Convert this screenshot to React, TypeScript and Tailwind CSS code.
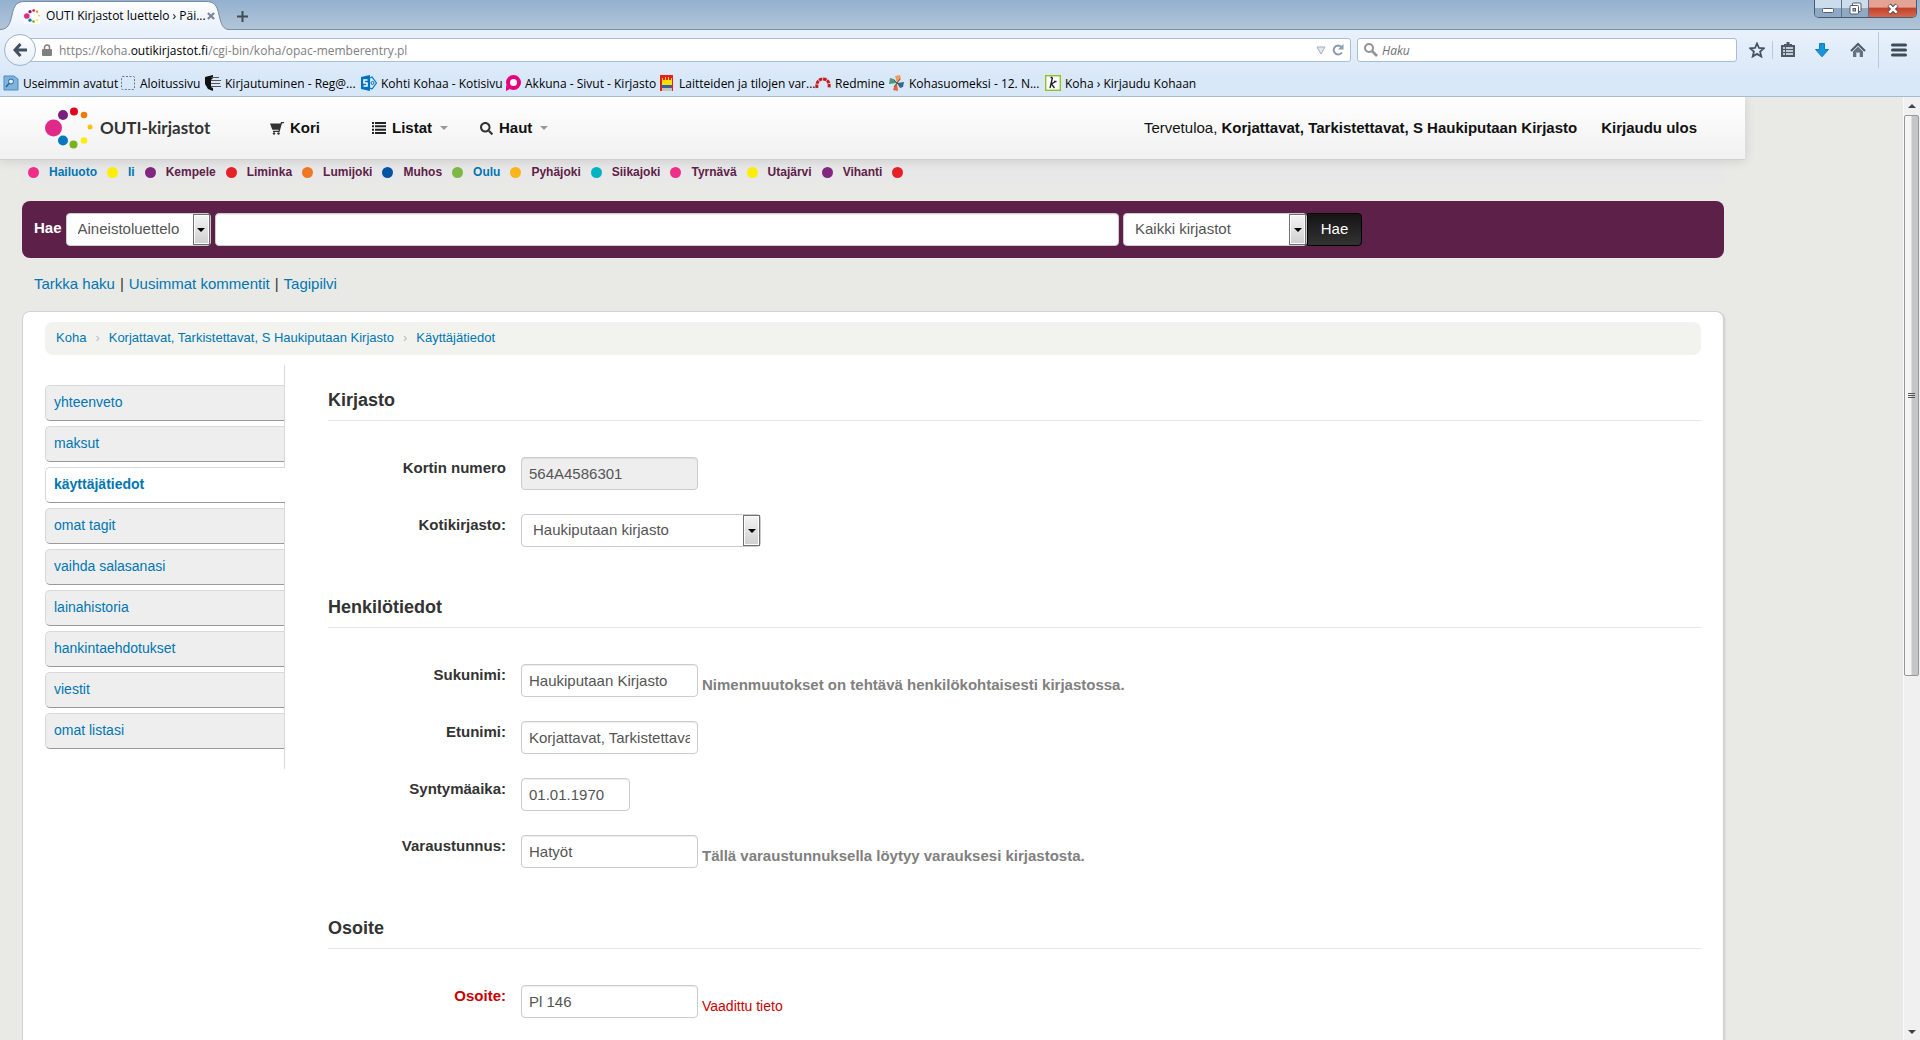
import { type ReactNode } from "react";
import { FaSearch } from "react-icons/fa";

const towns = [
  { name: "Hailuoto", dot: "bg-[#ee2e87]", link: true },
  { name: "Ii", dot: "bg-[#fdee0a]", link: true },
  { name: "Kempele", dot: "bg-[#82277f]" },
  { name: "Liminka", dot: "bg-[#e62127]" },
  { name: "Lumijoki", dot: "bg-[#ee7824]" },
  { name: "Muhos", dot: "bg-[#0454a4]" },
  { name: "Oulu", dot: "bg-[#7cb843]", link: true },
  { name: "Pyhäjoki", dot: "bg-[#f8b51c]" },
  { name: "Siikajoki", dot: "bg-[#00b4c3]" },
  { name: "Tyrnävä", dot: "bg-[#ee2e87]" },
  { name: "Utajärvi", dot: "bg-[#fdee0a]" },
  { name: "Vihanti", dot: "bg-[#82277f]" },
];

const tabs = [
  "yhteenveto",
  "maksut",
  "käyttäjätiedot",
  "omat tagit",
  "vaihda salasanasi",
  "lainahistoria",
  "hankintaehdotukset",
  "viestit",
  "omat listasi",
];

function LogoDots({ className }: { className: string }) {
  return (
    <svg viewBox="0 0 48 42" className={className} aria-hidden>
      <circle cx="8.5" cy="21" r="8.5" fill="#df2a8a" />
      <circle cx="18" cy="8" r="5" fill="#7b1f80" />
      <circle cx="29" cy="4.5" r="4" fill="#e2061c" />
      <circle cx="39" cy="8" r="3.3" fill="#ee7d0c" />
      <circle cx="45" cy="20" r="2.5" fill="#fbbf08" />
      <circle cx="39" cy="33.5" r="3.3" fill="#fdee0a" />
      <circle cx="28.5" cy="37.5" r="4" fill="#78b41c" />
      <circle cx="18" cy="33.5" r="5" fill="#0578be" />
    </svg>
  );
}

function WindowButtons() {
  return (
    <div className="flex h-[18px] w-[103px] self-start overflow-hidden rounded-b-[5px] border border-t-0 border-[#4b5b6e]">
      <button aria-label="Pienennä" className="flex flex-1 items-center justify-center border-r border-[#5f7186] bg-linear-to-b from-[#cbdcec] from-45% to-[#8fa9c4] to-50%">
        <svg viewBox="0 0 12 12" className="h-3 w-3">
          <rect x="0.5" y="5.5" width="11" height="4" rx="1" fill="#fff" stroke="#525c6b" />
        </svg>
      </button>
      <button aria-label="Palauta" className="flex flex-1 items-center justify-center border-r border-[#5f7186] bg-linear-to-b from-[#cbdcec] from-45% to-[#8fa9c4] to-50%">
        <svg viewBox="0 0 13 13" className="h-[13px] w-[13px]">
          <rect x="3.5" y="1" width="8.5" height="8.5" rx="1" fill="#fff" stroke="#525c6b" />
          <rect x="1" y="3.5" width="8.5" height="8.5" rx="1" fill="#fff" stroke="#525c6b" />
          <rect x="4" y="6.5" width="2.5" height="2.5" fill="#a8bacd" stroke="#525c6b" />
        </svg>
      </button>
      <button aria-label="Sulje" className="flex w-[47px] items-center justify-center bg-linear-to-b from-[#e3a496] from-40% via-[#c4412c] via-50% to-[#d4694f]">
        <svg viewBox="0 0 12 12" className="h-3 w-3">
          <path d="M2 2l8 8M10 2l-8 8" stroke="#5a4650" strokeWidth="4.5" />
          <path d="M2.3 2.3l7.4 7.4M9.7 2.3l-7.4 7.4" stroke="#fff" strokeWidth="2.6" />
        </svg>
      </button>
    </div>
  );
}

function TitleBar() {
  return (
    <div className="flex h-[30px] items-start justify-between border-b border-[#7590aa] bg-linear-to-b from-[#93b1d0] to-[#b3c5d7]">
      <div className="flex h-[30px]">
        <div className="relative h-[30px] w-[229px]">
          <svg viewBox="0 0 229 30" className="absolute inset-0 h-[30px] w-[229px]" aria-hidden>
            <defs>
              <linearGradient id="tab" x1="0" y1="0" x2="0" y2="1">
                <stop offset="0" stopColor="#fdfeff" />
                <stop offset="1" stopColor="#e9f1fb" />
              </linearGradient>
            </defs>
            <path d="M0 29.5C8 29.5 10 24 12 15C14 5 17 1.5 25 1.5H206C214 1.5 217 5 219 15C221 24 223 29.5 229 29.5V30H0Z" fill="url(#tab)" />
            <path d="M0 29.5C8 29.5 10 24 12 15C14 5 17 1.5 25 1.5H206C214 1.5 217 5 219 15C221 24 223 29.5 229 29.5" fill="none" stroke="#748ba5" />
          </svg>
          <div className="relative flex h-8 items-center pr-[14px] pl-6">
            <span className="flex h-4 w-4 items-center bg-white">
              <LogoDots className="h-4 w-4" />
            </span>
            <span className="ml-1.5 flex-1 whitespace-nowrap">OUTI Kirjastot luettelo › Päi...</span>
            <button aria-label="Sulje välilehti">
              <svg viewBox="0 0 9 9" className="h-2 w-2">
                <path d="M1 1l7 7M8 1l-7 7" stroke="#7c8794" strokeWidth="2.4" />
              </svg>
            </button>
          </div>
        </div>
        <button aria-label="Uusi välilehti" className="ml-2 flex h-8 items-center">
          <svg viewBox="0 0 11 11" className="h-[11px] w-[11px]">
            <path d="M5.5 0v11M0 5.5h11" stroke="#3f4c58" strokeWidth="2" />
          </svg>
        </button>
      </div>
      <div className="pr-[3px]">
        <WindowButtons />
      </div>
    </div>
  );
}

function NavBar() {
  return (
    <div className="flex h-10 items-center pr-[13px] pl-1">
      <button aria-label="Takaisin" className="relative z-10 flex h-8 w-8 shrink-0 items-center justify-center rounded-full border border-[#9db2ca] bg-linear-to-b from-white to-[#e6eff9]">
        <svg viewBox="0 0 14 14" className="h-3.5 w-3.5">
          <path d="M7.5 1L2 7l5.500 6M2.500 7H14" fill="none" stroke="#43505d" strokeWidth="3" />
        </svg>
      </button>
      <div className="-ml-3 flex h-6 flex-1 items-center rounded-[3px] border border-[#a9bdd5] bg-white pr-1.5 pl-[17px]">
        <svg viewBox="0 0 10 12" className="h-3 w-2.5 shrink-0" aria-hidden>
          <path d="M2.500 6V3.500a2.500 2.500 0 015 0V6" fill="none" stroke="#808080" strokeWidth="1.5" />
          <rect y="5" width="10" height="7" rx="1" fill="#808080" />
        </svg>
        <div className="ml-[7px] flex-1 pt-0.5 text-[#808080]">
          https://koha.<span className="text-black">outikirjastot.fi</span>/cgi-bin/koha/opac-memberentry.pl
        </div>
        <svg viewBox="0 0 10 9" className="h-[9px] w-2.5" aria-hidden>
          <path d="M1 1h8L5 8z" fill="#e2e8ef" stroke="#a4b0bd" />
        </svg>
        <button aria-label="Päivitä" className="ml-1.5">
          <svg viewBox="0 0 12 12" className="h-3 w-3">
            <path d="M10 8.500A4.500 4.500 0 116 1.500c1.500 0 2.500.6 3.500 1.700" fill="none" stroke="#8b9cb0" strokeWidth="2" />
            <path d="M11.500 0v5.500H6z" fill="#8b9cb0" />
          </svg>
        </button>
      </div>
      <label className="ml-1.5 flex h-6 w-[380px] items-center rounded-[3px] border border-[#a9bdd5] bg-white px-1.5">
        <svg viewBox="0 0 14 14" className="h-3.5 w-3.5 shrink-0" aria-hidden>
          <circle cx="5" cy="5" r="4" fill="none" stroke="#939393" strokeWidth="2" />
          <path d="M8 8l5 5" stroke="#939393" strokeWidth="2.6" />
        </svg>
        <input aria-label="Haku" placeholder="Haku" className="ml-1 w-full bg-transparent pt-0.5 outline-none placeholder:text-[#707070] placeholder:italic" />
      </label>
      <button aria-label="Lisää kirjanmerkki" className="ml-3">
        <svg viewBox="0 0 16 16" className="h-4 w-4">
          <path d="M8 1.500l2 4.500 4.800.4-3.700 3.200 1.200 4.900L8 11.900l-4.300 2.600 1.200-4.900L1.200 6.400 6 6z" fill="none" stroke="#45525f" strokeWidth="1.8" />
        </svg>
      </button>
      <div className="mx-[7px] h-[18px] w-px bg-[#b9cadd]" />
      <button aria-label="Kirjanmerkit">
        <svg viewBox="0 0 16 16" className="h-4 w-4">
          <path d="M1 3h14v12H1z" fill="#4d5a67" />
          <path d="M4 3V2h2.500V0h3v2H12v1z" fill="#4d5a67" />
          <path d="M3 6h2M6 6h7M3 9h2M6 9h7M3 12h2M6 12h7" stroke="#eef4fb" strokeWidth="1.7" />
        </svg>
      </button>
      <button aria-label="Lataukset" className="ml-[18px]">
        <svg viewBox="0 0 16 16" className="h-4 w-4">
          <path d="M5.500 1.500h5v6h4L8 14.800 1.500 7.500h4z" fill="#1795da" stroke="#0f7cbb" />
        </svg>
      </button>
      <button aria-label="Koti" className="ml-5">
        <svg viewBox="0 0 16 16" className="h-4 w-4">
          <path d="M1 9l7-7 7 7" fill="none" stroke="#4d5a67" strokeWidth="2" />
          <path d="M3 9.500l5-5 5 5V15h-3.300v-4.500H6.300V15H3z" fill="#65717e" />
        </svg>
      </button>
      <div className="mx-3 h-9 w-px bg-[#b9cadd]" />
      <button aria-label="Valikko">
        <svg viewBox="0 0 16 14" className="h-3.5 w-4">
          <path d="M1.500 2h13M1.500 7h13M1.500 12h13" stroke="#3f4c57" strokeWidth="3" strokeLinecap="round" />
        </svg>
      </button>
    </div>
  );
}

function Bookmark({ width, icon, children }: { width: string; icon: ReactNode; children: ReactNode }) {
  return (
    <a href="#" className={`flex shrink-0 items-center gap-1 whitespace-nowrap ${width}`}>
      <svg viewBox="0 0 16 16" className="h-4 w-4 shrink-0" aria-hidden>
        {icon}
      </svg>
      <span className="pt-0.5">{children}</span>
    </a>
  );
}

function BookmarksBar() {
  return (
    <nav className="flex h-[26px] items-center pl-[3px]">
      <Bookmark
        width="w-[117px]"
        icon={
          <>
            <path d="M1 1h10l4 3v11H1z" fill="#7fb4de" stroke="#4c8cbd" />
            <circle cx="8" cy="6.5" r="2.5" fill="#d8ecfa" stroke="#2a648f" />
            <path d="M6 8.500L3 12" stroke="#2a648f" strokeWidth="1.5" />
          </>
        }
      >
        Useimmin avatut
      </Bookmark>
      <Bookmark width="w-[85px]" icon={<rect x="1.5" y="1.5" width="13" height="13" rx="1" fill="none" stroke="#6d7682" strokeDasharray="2 1.5" />}>
        Aloitussivu
      </Bookmark>
      <Bookmark
        width="w-[156px]"
        icon={
          <>
            <path d="M0 2l8-2v3L6 5v7l2 1v3L3 14 0 9z" fill="#111" />
            <path d="M6 2.500h8M6 5.500h10M6 8.500h9M6 11.500h10" stroke="#555" />
          </>
        }
      >
        Kirjautuminen - Reg@...
      </Bookmark>
      <Bookmark
        width="w-[144px]"
        icon={
          <>
            <path d="M9 3l2-1 4.500 6L11 14l-2-1" fill="#d3e9f8" stroke="#0072c6" strokeWidth="1.2" />
            <circle cx="11.5" cy="8" r="1.5" fill="none" stroke="#0072c6" />
            <path d="M0 2l9-2v16l-9-2z" fill="#0072c6" />
            <path d="M6.500 5H3v3h3v3H2.500" fill="none" stroke="#fff" strokeWidth="1.5" />
          </>
        }
      >
        Kohti Kohaa - Kotisivu
      </Bookmark>
      <Bookmark
        width="w-[154px]"
        icon={
          <>
            <circle cx="8.5" cy="7.5" r="5.5" fill="#fff" stroke="#e6007e" strokeWidth="4" />
            <path d="M1 10l4 4-4 2z" fill="#e6007e" />
          </>
        }
      >
        Akkuna - Sivut - Kirjasto
      </Bookmark>
      <Bookmark
        width="w-[156px]"
        icon={
          <>
            <path d="M1 0h13v16H1z" fill="#ee1c1c" />
            <path d="M3 3h1v2h2V2h1v3h2V2h1v3h2V3h1v7H3z" fill="#ffe000" />
            <path d="M2 10h11l-1 3H3z" fill="#2f64a8" />
            <path d="M3 13h10v3H3z" fill="#c9c3b0" />
          </>
        }
      >
        Laitteiden ja tilojen var...
      </Bookmark>
      <Bookmark
        width="w-[74px]"
        icon={<path d="M2 13C1 7 4 4 8 4s7 3 6 9" fill="none" stroke="#c81a1a" strokeWidth="3" strokeDasharray="3.5 .7" />}
      >
        Redmine
      </Bookmark>
      <Bookmark
        width="w-[156px]"
        icon={
          <>
            <path d="M8 8L6 1l5-1 1 4z" fill="#f19a5b" />
            <path d="M8 8l7-1-1 5-3 1z" fill="#35668f" />
            <path d="M8 8l1 8-5-1 1-3z" fill="#e8603c" />
            <path d="M8 8L0 9l1-6 4 1z" fill="#4a9a7c" />
            <path d="M5 5l6 6M11 4L5 12" stroke="#555" />
          </>
        }
      >
        Kohasuomeksi - 12. N...
      </Bookmark>
      <Bookmark
        width="w-[150px]"
        icon={
          <>
            <rect x=".7" y=".7" width="14.6" height="14.6" fill="#fff" stroke="#8fc31f" strokeWidth="1.4" />
            <path d="M7.500 2.500L5 13M10.500 6.500L6.500 9l3 4M9 6.500h2.500M5.500 2.500h2" fill="none" stroke="#222" strokeWidth="1.4" />
          </>
        }
      >
        Koha › Kirjaudu Kohaan
      </Bookmark>
    </nav>
  );
}

function Caret() {
  return <span className="ml-2 h-0 w-0 border-x-4 border-t-4 border-x-transparent border-t-[#999]" />;
}

function SiteHeader() {
  return (
    <header className="relative flex h-[63px] items-center border-b border-[#d0d0d0] bg-linear-to-b from-white to-[#f1f1f1] pr-12 pl-[45px] text-[15px] leading-5 text-[#111] shadow-[0_1px_10px_rgba(0,0,0,0.12)]">
      <a href="#" className="flex w-[225px] items-center gap-[7px]">
        <LogoDots className="h-[42px] w-12" />
        <span className="font-['Lato','Open_Sans',sans-serif] text-[17px] font-bold text-[#333]">OUTI-kirjastot</span>
      </a>
      <a href="#" className="flex w-[102px] items-center gap-1.5 font-bold">
        <svg viewBox="0 0 14 14" className="h-3.5 w-3.5" aria-hidden>
          <path d="M0 2.500h10.500L11 1h3v1.300h-2L9.500 11H3V9.700h5.500l.2-.9H2.300z" fill="#333" />
          <circle cx="4" cy="12.5" r="1.2" fill="#333" />
          <circle cx="8.5" cy="12.5" r="1.2" fill="#333" />
        </svg>
        Kori
      </a>
      <a href="#" className="flex w-[108px] items-center font-bold">
        <svg viewBox="0 0 14 14" className="mr-1.5 h-3.5 w-3.5" aria-hidden>
          <path d="M0 2h2M3 2h11M0 5.300h2M3 5.300h11M0 8.700h2M3 8.700h11M0 12h2M3 12h11" stroke="#222" strokeWidth="2" />
        </svg>
        Listat
        <Caret />
      </a>
      <a href="#" className="flex items-center font-bold">
        <FaSearch size={13} className="mr-1.5 text-[#333]" />
        Haut
        <Caret />
      </a>
      <div className="ml-auto flex gap-6 whitespace-nowrap">
        <span>
          Tervetuloa,{" "}
          <a href="#" className="font-bold">
            Korjattavat, Tarkistettavat, S Haukiputaan Kirjasto
          </a>
        </span>
        <a href="#" className="font-bold">
          Kirjaudu ulos
        </a>
      </div>
    </header>
  );
}

function TownStrip() {
  return (
    <div className="flex h-[23px] items-center gap-[10px] bg-[#e8e8e8] pt-px pl-1.5 text-[12px] font-bold">
      {towns.map((t) => (
        <span key={t.name} className="flex items-center gap-[10px]">
          <span className={`h-[11px] w-[11px] rounded-full ${t.dot}`} />
          <a href="#" className={t.link ? "text-[#0076b2]" : "text-[#5d2149]"}>
            {t.name}
          </a>
        </span>
      ))}
      <span className="h-[11px] w-[11px] rounded-full bg-[#e62127]" />
    </div>
  );
}

function Select({ id, value, className }: { id: string; value: string; className: string }) {
  return (
    <span className={`relative inline-flex h-[33px] ${className}`}>
      <select id={id} className="h-full w-full appearance-none rounded-[4px] border border-[#ccc] bg-white pr-5 pl-[11px] text-[15px] text-[#555]">
        <option>{value}</option>
      </select>
      <span className="pointer-events-none absolute inset-y-px right-px flex w-[17px] items-center justify-center border border-[#707070] bg-linear-to-b from-[#f4f4f4] to-[#cfcfcf] shadow-[inset_0_0_0_1px_#fcfcfc]">
        <span className="border-x-4 border-t-4 border-x-transparent border-t-black" />
      </span>
    </span>
  );
}

function SearchBar() {
  return (
    <form className="mt-[18px] flex h-[57px] items-center rounded-lg bg-[#5d2149] pr-[362px] pl-3 text-[15px]">
      <label htmlFor="search-type" className="mr-1 pb-0.5 font-bold text-white">
        Hae
      </label>
      <Select id="search-type" value="Aineistoluettelo" className="w-[145px] shrink-0" />
      <input aria-label="Hakusanat" className="mx-1 h-[33px] min-w-0 flex-1 rounded-[4px] border border-[#ccc] bg-white px-1.5 shadow-[inset_0_1px_1px_rgba(0,0,0,0.075)]" />
      <Select id="search-library" value="Kaikki kirjastot" className="w-[184px] shrink-0" />
      <button type="button" className="h-[33px] w-[55px] rounded-r-[4px] border border-black bg-linear-to-b from-[#151515] to-[#333] text-white">
        Hae
      </button>
    </form>
  );
}

function Sidebar() {
  return (
    <nav className="flex h-[404px] w-[240px] shrink-0 flex-col border-r border-[#d8d8d8] pt-5 text-[14px]">
      {tabs.map((tab) => {
        const active = tab === "käyttäjätiedot";
        return (
          <a
            key={tab}
            href="#"
            className={`mb-[5px] flex h-9 items-center rounded-l-[5px] border border-r-0 border-[#d8d8d8] border-b-[#999] pb-px pl-2 text-[#0076b2] ${
              active ? "-mr-px bg-white font-bold" : "bg-[#eee]"
            }`}
          >
            {tab}
          </a>
        );
      })}
    </nav>
  );
}

function Section({ title, children }: { title: string; children: ReactNode }) {
  return (
    <fieldset className="mb-12">
      <legend className="w-full border-b border-[#e5e5e5] pb-2 text-[18px] leading-6 font-bold text-[#333]">{title}</legend>
      <div className="mt-9 flex flex-col gap-6">{children}</div>
    </fieldset>
  );
}

function Row({ id, label, required, hint, children }: { id: string; label: string; required?: boolean; hint?: string; children: ReactNode }) {
  return (
    <div className="flex h-[33px] items-start">
      <label htmlFor={id} className={`mr-[15px] w-[178px] text-right text-[15px] leading-[22px] font-bold ${required ? "text-[#c00]" : "text-[#333]"}`}>
        {label}
      </label>
      {children}
      {hint && <span className={`ml-1 self-end leading-6 ${required ? "text-[14px] text-[#c00]" : "text-[15px] font-bold text-[#808080]"}`}>{hint}</span>}
    </div>
  );
}

function TextField({ id, value, disabled, className = "w-[177px]" }: { id: string; value: string; disabled?: boolean; className?: string }) {
  return (
    <input
      id={id}
      type="text"
      defaultValue={value}
      disabled={disabled}
      className={`h-[33px] rounded-[4px] border border-[#ccc] bg-white px-[7px] text-[15px] text-[#555] shadow-[inset_0_1px_1px_rgba(0,0,0,0.075)] disabled:bg-[#eee] ${className}`}
    />
  );
}

function MemberForm() {
  return (
    <form className="min-w-0 flex-1 pt-[23px] pl-[43px]">
      <Section title="Kirjasto">
        <Row id="cardnumber" label="Kortin numero">
          <TextField id="cardnumber" value="564A4586301" disabled />
        </Row>
        <Row id="branch" label="Kotikirjasto:">
          <Select id="branch" value="Haukiputaan kirjasto" className="w-[240px]" />
        </Row>
      </Section>
      <Section title="Henkilötiedot">
        <Row id="surname" label="Sukunimi:" hint="Nimenmuutokset on tehtävä henkilökohtaisesti kirjastossa.">
          <TextField id="surname" value="Haukiputaan Kirjasto" />
        </Row>
        <Row id="firstname" label="Etunimi:">
          <TextField id="firstname" value="Korjattavat, Tarkistettavat, S" />
        </Row>
        <Row id="birthdate" label="Syntymäaika:">
          <TextField id="birthdate" value="01.01.1970" className="w-[109px]" />
        </Row>
        <Row id="othernames" label="Varaustunnus:" hint="Tällä varaustunnuksella löytyy varauksesi kirjastosta.">
          <TextField id="othernames" value="Hatyöt" />
        </Row>
      </Section>
      <Section title="Osoite">
        <Row id="address" label="Osoite:" required hint="Vaadittu tieto">
          <TextField id="address" value="Pl 146" />
        </Row>
      </Section>
    </form>
  );
}

function ScrollBar() {
  return (
    <div className="flex w-[17px] shrink-0 flex-col items-start border-l border-[#f8f8f8] bg-[#f0f0f0]" aria-hidden>
      <div className="flex h-[18px] w-[15px] items-center justify-center">
        <span className="border-x-4 border-b-4 border-x-transparent border-b-[#444]" />
      </div>
      <div className="flex h-[59.5%] w-[15px] flex-col items-center justify-center gap-px rounded-[2px] border border-[#979797] bg-linear-to-r from-[#f5f5f5] from-45% to-[#c4c6c9] to-55%">
        <span className="h-px w-[7px] bg-[#555]" />
        <span className="h-px w-[7px] bg-[#555]" />
        <span className="h-px w-[7px] bg-[#555]" />
      </div>
      <div className="mt-auto flex h-4 w-[15px] items-center justify-center">
        <span className="border-x-4 border-t-4 border-x-transparent border-t-[#444]" />
      </div>
    </div>
  );
}

export default function App() {
  return (
    <div className="flex h-screen flex-col overflow-hidden bg-[#e9eae5] font-['Liberation_Sans',Arial,sans-serif]">
      <div className="shrink-0 border-b border-[#a5bad5] bg-[#d9e8f8] font-['Open_Sans','Noto_Sans',sans-serif] text-[12px] leading-4 text-black">
        <TitleBar />
        <div className="bg-linear-to-b from-[#e9f1fb] to-[#d9e8f8] to-70%">
          <NavBar />
          <BookmarksBar />
        </div>
      </div>
      <div className="flex min-h-0 flex-1">
        <div className="min-w-0 flex-1 overflow-hidden pr-[158px]">
          <SiteHeader />
          <main className="pr-[21px] pl-[22px]">
            <TownStrip />
            <SearchBar />
            <div className="flex h-[53px] items-center gap-[5px] pb-px pl-3 text-[15px] text-[#333]">
              <a href="#" className="text-[#0076b2]">Tarkka haku</a>|
              <a href="#" className="text-[#0076b2]">Uusimmat kommentit</a>|
              <a href="#" className="text-[#0076b2]">Tagipilvi</a>
            </div>
            <div className="rounded-lg border border-[#d2d2cf] bg-white px-[22px] pt-2.5 shadow-[1px_1px_2px_rgba(0,0,0,0.12)]">
              <nav className="flex h-[33px] items-center gap-[9px] rounded-lg bg-[#f2f3ee] px-[11px] pb-0.5 text-[13px] text-[#bbb]">
                <a href="#" className="text-[#0076b2]">Koha</a>›
                <a href="#" className="text-[#0076b2]">Korjattavat, Tarkistettavat, S Haukiputaan Kirjasto</a>›
                <a href="#" className="text-[#0076b2]">Käyttäjätiedot</a>
              </nav>
              <div className="mt-[10px] flex">
                <Sidebar />
                <MemberForm />
              </div>
            </div>
          </main>
        </div>
        <ScrollBar />
      </div>
    </div>
  );
}
